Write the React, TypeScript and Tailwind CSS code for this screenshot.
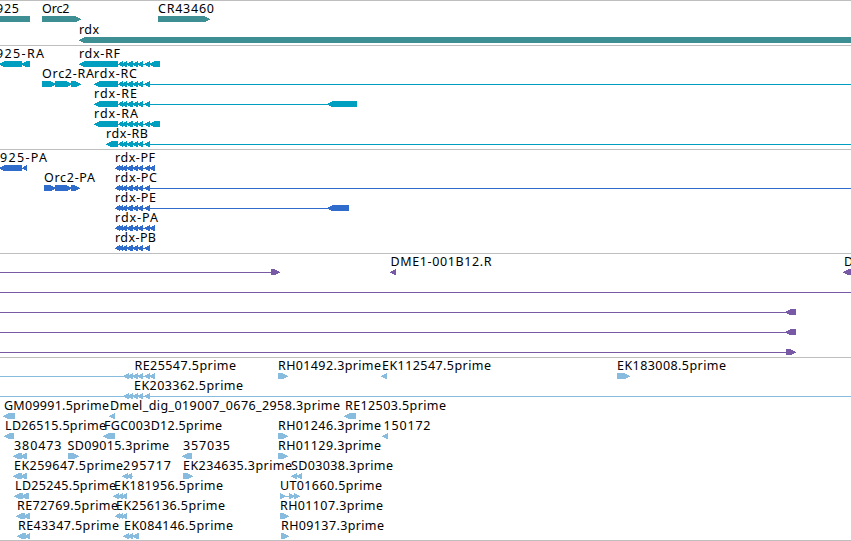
type Label = [text: string, start: number, end: number];
type Glyph = [kind: 'l' | 'r' | '-', start: number, end: number];
type Row = { labels?: Label[]; glyphs: Glyph[] };
type Track = { name: string; color: string; rowClass: string; padClass: string; rows: Row[] };

const transcriptExons: Glyph[] = [
  ['-', 118, 150],
  ['l', 118, 123],
  ['l', 121, 127],
  ['l', 126, 133],
  ['l', 132, 138],
  ['l', 137, 143],
  ['l', 144, 150],
];

const proteinExons: Glyph[] = [
  ['-', 115, 150],
  ['l', 115, 120],
  ['l', 118, 123],
  ['l', 121, 127],
  ['l', 126, 133],
  ['l', 132, 138],
  ['l', 137, 143],
  ['l', 144, 150],
];

const tracks: Track[] = [
  {
    name: 'genes',
    color: '#3d8f93',
    rowClass: 'h-[21px]',
    padClass: 'pb-0.5',
    rows: [
      {
        labels: [['925', -4, 19], ['Orc2', 42, 69.5], ['CR43460', 158, 214]],
        glyphs: [['l', -20, 30], ['r', 42, 81], ['r', 158, 210]],
      },
      { labels: [['rdx', 79, 99]], glyphs: [['l', 79, 860]] },
    ],
  },
  {
    name: 'transcripts',
    color: '#009fc0',
    rowClass: 'h-5',
    padClass: 'pb-[3px]',
    rows: [
      {
        labels: [['925-RA', -4, 44], ['rdx-RF', 79, 120]],
        glyphs: [['l', -1, 22], ['l', 21, 30], ['l', 79, 118], ...transcriptExons, ['-', 150, 152], ['l', 149, 160]],
      },
      {
        labels: [['Orc2-RA', 42, 94], ['rdx-RC', 94, 137]],
        glyphs: [['-', 42, 80], ['r', 42, 56], ['r', 55, 72], ['r', 71, 81], ['l', 94, 118], ...transcriptExons, ['-', 150, 851]],
      },
      {
        labels: [['rdx-RE', 94, 137]],
        glyphs: [['l', 94, 118], ...transcriptExons, ['-', 150, 328], ['l', 327, 357]],
      },
      {
        labels: [['rdx-RA', 94, 138]],
        glyphs: [['l', 94, 118], ...transcriptExons, ['l', 149, 160]],
      },
      {
        labels: [['rdx-RB', 106, 148]],
        glyphs: [['l', 106, 118], ...transcriptExons, ['-', 150, 851]],
      },
    ],
  },
  {
    name: 'proteins',
    color: '#306ccb',
    rowClass: 'h-5',
    padClass: 'pb-[3px]',
    rows: [
      {
        labels: [['925-PA', 0, 47], ['rdx-PF', 115, 155]],
        glyphs: [['l', -1, 22], ['l', 22, 27], ...proteinExons, ['l', 149, 155]],
      },
      {
        labels: [['Orc2-PA', 44, 95], ['rdx-PC', 115, 157]],
        glyphs: [['-', 44, 79], ['r', 44, 56], ['r', 55, 72], ['r', 71, 80], ...proteinExons, ['-', 150, 851]],
      },
      { labels: [['rdx-PE', 115, 156]], glyphs: [...proteinExons, ['-', 150, 328], ['l', 327, 349]] },
      { labels: [['rdx-PA', 115, 158]], glyphs: [...proteinExons, ['l', 149, 155]] },
      { labels: [['rdx-PB', 115, 156]], glyphs: proteinExons },
    ],
  },
  {
    name: 'clones',
    color: '#7759a6',
    rowClass: 'h-5',
    padClass: 'pb-[3px]',
    rows: [
      {
        labels: [['DME1-001B12.R', 390.5, 491.5], ['D', 844, 853]],
        glyphs: [['-', 0, 272], ['r', 271, 280], ['l', 390, 396], ['l', 843, 860]],
      },
      { glyphs: [['-', 0, 851]] },
      { glyphs: [['-', 0, 787], ['l', 785, 796]] },
      { glyphs: [['-', 0, 787], ['l', 785, 796]] },
      { glyphs: [['-', 0, 787], ['r', 786, 796]] },
    ],
  },
  {
    name: 'cDNA',
    color: '#87bcde',
    rowClass: 'h-5',
    padClass: 'pb-0.5',
    rows: [
      {
        labels: [['RE25547.5prime', 134.5, 236], ['RH01492.3prime', 278, 381], ['EK112547.5prime', 382, 491], ['EK183008.5prime', 617, 726]],
        glyphs: [['-', 0, 150], ['l', 123, 129], ['l', 127, 133], ['l', 132, 138], ['l', 137, 143], ['l', 144, 150], ['l', 149, 155], ['r', 278, 288], ['l', 381, 387], ['r', 617, 630]],
      },
      {
        labels: [['EK203362.5prime', 134, 243]],
        glyphs: [['-', 0, 851], ['l', 123, 129], ['l', 127, 133], ['l', 132, 138], ['l', 137, 143], ['l', 144, 150]],
      },
      {
        labels: [['GM09991.5prime', 4, 109], ['Dmel_dig_019007_0676_2958.3prime', 110, 340], ['RE12503.5prime', 345, 446]],
        glyphs: [['l', 3, 15], ['l', 109, 115], ['l', 344, 356]],
      },
      {
        labels: [['LD26515.5prime', 5, 106], ['FGC003D12.5prime', 104, 222], ['RH01246.3prime', 278, 381], ['150172', 383.5, 430.5]],
        glyphs: [['l', 4, 14], ['l', 103, 115], ['r', 278, 288], ['l', 382, 388]],
      },
      {
        labels: [['380473', 14, 61.5], ['SD09015.3prime', 67.5, 169], ['357035', 183, 230], ['RH01129.3prime', 278, 381]],
        glyphs: [['l', 13, 22], ['l', 20, 27], ['r', 68, 79], ['l', 182, 192], ['r', 278, 288]],
      },
      {
        labels: [['EK259647.5prime', 14, 123], ['295717', 123, 171], ['EK234635.3prime', 183, 292], ['SD03038.3prime', 291, 393]],
        glyphs: [['l', 13, 22], ['l', 20, 27], ['l', 122, 128], ['l', 126, 132], ['-', 131, 133], ['r', 183, 193], ['l', 291, 297], ['l', 296, 302]],
      },
      {
        labels: [['LD25245.5prime', 15, 116], ['EK181956.5prime', 114, 223], ['UT01660.5prime', 280, 382]],
        glyphs: [['l', 14, 23], ['l', 21, 29], ['l', 113, 119], ['l', 117, 123], ['l', 121, 127], ['-', 280, 299], ['r', 280, 286], ['r', 289, 295], ['r', 294, 300]],
      },
      {
        labels: [['RE72769.5prime', 17, 118], ['EK256136.5prime', 116, 225], ['RH01107.3prime', 280, 383]],
        glyphs: [['l', 16, 25], ['l', 23, 30], ['l', 115, 120], ['l', 118, 123], ['l', 121, 127], ['r', 280, 289]],
      },
      {
        labels: [['RE43347.5prime', 18, 119], ['EK084146.5prime', 124, 233], ['RH09137.3prime', 281, 384]],
        glyphs: [['l', 17, 26], ['l', 24, 30], ['l', 123, 129], ['l', 127, 133], ['l', 132, 139], ['r', 281, 289]],
      },
    ],
  },
];

// A feature is six pixels high and tapers over six pixels towards its strand direction.
function Feature({ glyph: [kind, a, b] }: { glyph: Glyph }) {
  if (kind === '-') return <rect x={a} y={18} width={b - a} height={1} />;
  const head = Math.min(6, b - a);
  const points =
    kind === 'l'
      ? `${a},18 ${a},18.6 ${a + head},21.3 ${b},21.3 ${b},14.7 ${a + head},14.7`
      : `${b},18 ${b},18.6 ${b - head},21.3 ${a},21.3 ${a},14.7 ${b - head},14.7`;
  return <polygon points={points} />;
}

function TrackRow({ row, color, rowClass }: { row: Row; color: string; rowClass: string }) {
  return (
    <svg className={`block w-[851px] shrink-0 overflow-visible ${rowClass}`}>
      <g fill={color} shapeRendering="crispEdges">
        {row.glyphs.map((glyph, i) => (
          <Feature key={i} glyph={glyph} />
        ))}
      </g>
      {row.labels?.map(([text, start, end]) => (
        <text key={text} x={start} y={12} textLength={end - start} className="fill-black text-[12.5px]">
          {text}
        </text>
      ))}
    </svg>
  );
}

export default function App() {
  return (
    <main className="flex h-[541px] w-[851px] flex-col overflow-hidden border-b border-[#bebebe] bg-white font-['Noto_Sans','DejaVu_Sans',sans-serif]">
      {tracks.map((track) => (
        <section key={track.name} aria-label={track.name} className={`flex flex-col border-t border-[#bebebe] ${track.padClass}`}>
          {track.rows.map((row, i) => (
            <TrackRow key={i} row={row} color={track.color} rowClass={track.rowClass} />
          ))}
        </section>
      ))}
    </main>
  );
}
